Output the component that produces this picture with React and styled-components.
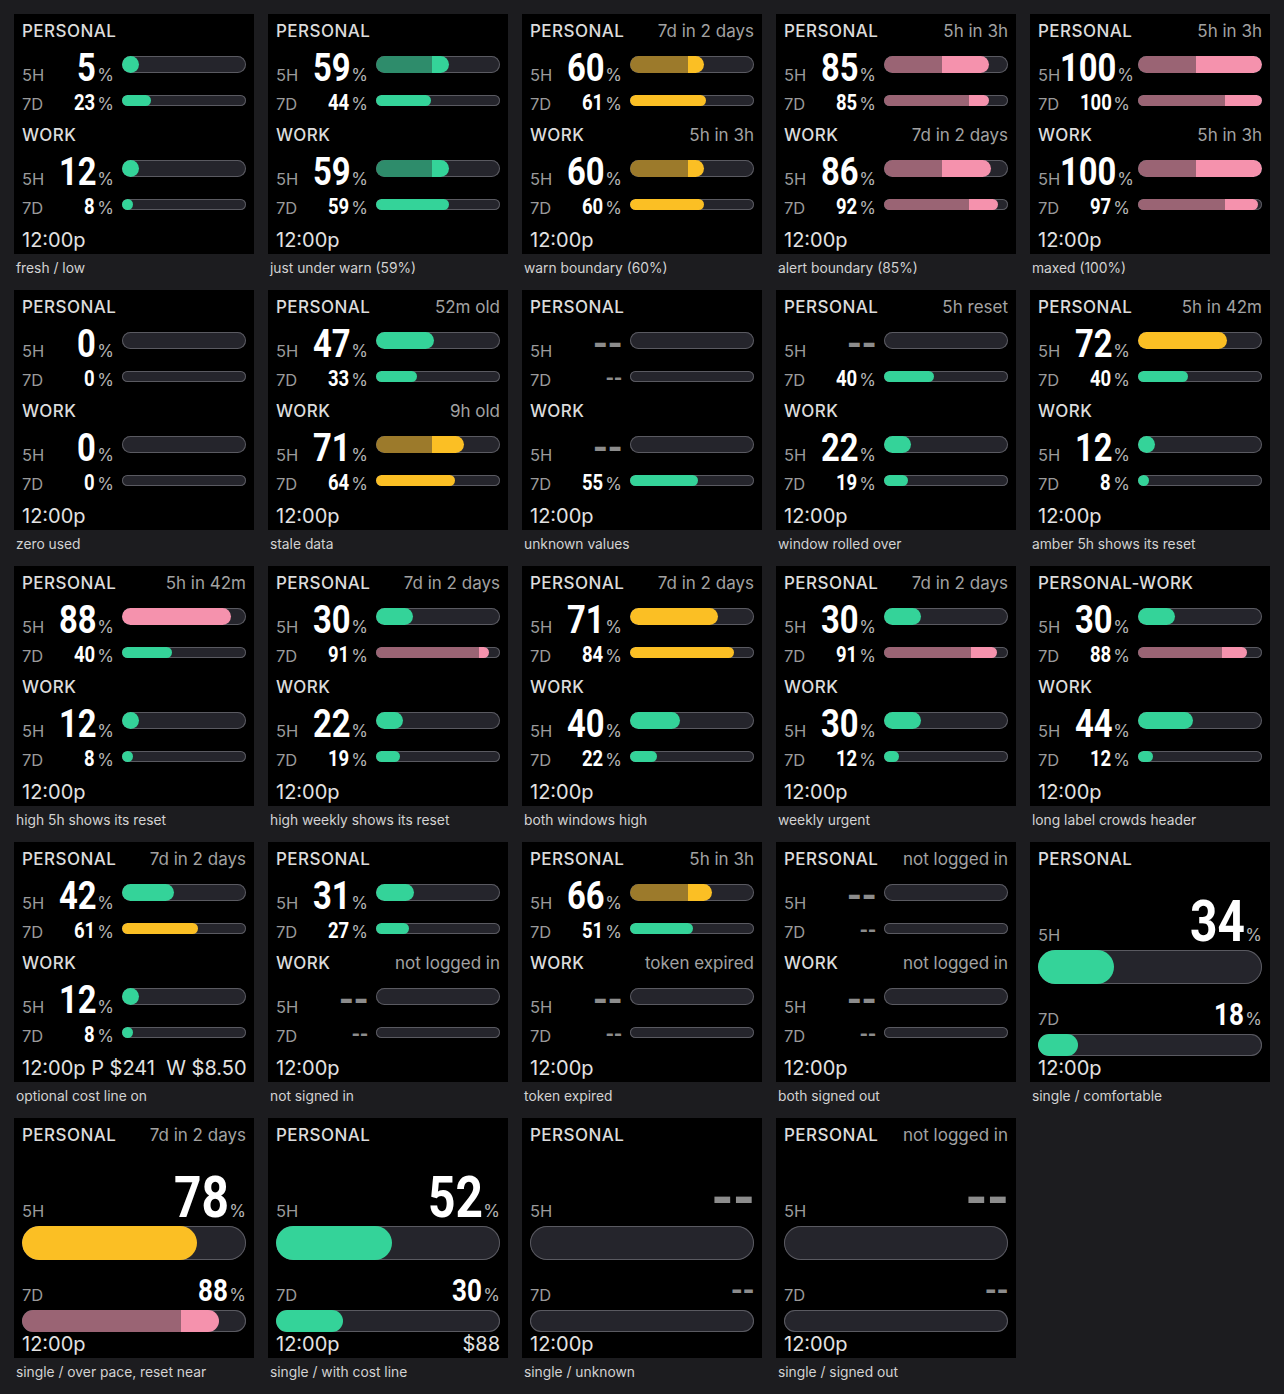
import React from "react";
import styled, { createGlobalStyle } from "styled-components";

const GlobalStyle = createGlobalStyle`
  html, body {
    margin: 0;
    padding: 0;
    background: #1c1c1f;
  }
  body {
    font-family: Inter, "Noto Sans", sans-serif;
    -webkit-font-smoothing: antialiased;
  }
`;

// Roboto Bold squeezed horizontally stands in for the condensed numerals
const NUM_FONT = `Roboto, "Liberation Sans", sans-serif`;
const SQUEEZE = 0.84;
const DIGIT = 0.5576;

const COLORS = {
  green: { bright: "#34d399", dark: "#2e8c6b" },
  amber: { bright: "#fbbf24", dark: "#9c7a2b" },
  pink: { bright: "#f592ad", dark: "#9a6474" },
};

const tone = (v) => (v >= 85 ? "pink" : v >= 60 ? "amber" : "green");

const Grid = styled.div`
  display: grid;
  grid-template-columns: repeat(5, 240px);
  column-gap: 14px;
  padding: 14px 14px 0;
  width: 1284px;
  min-height: 1394px;
  box-sizing: border-box;
  align-content: start;
`;

const Cell = styled.div`
  display: flex;
  flex-direction: column;
`;

const Card = styled.div`
  background: #000;
  height: 240px;
  box-sizing: border-box;
  padding: 6px 8px 2px;
  display: flex;
  flex-direction: column;
`;

const Caption = styled.div`
  height: 36px;
  box-sizing: border-box;
  padding: 5px 2px 0;
  font-size: 13.8px;
  line-height: 18px;
  color: #d2d2d2;
`;

const Sections = styled.div`
  display: flex;
  flex-direction: column;
  gap: 10px;
`;

const Header = styled.div`
  display: flex;
  justify-content: space-between;
  align-items: center;
  height: 22px;
  font-size: 17px;
  line-height: 22px;
  white-space: nowrap;
`;

const Title = styled.span`
  color: #dcdcdc;
  font-weight: 500;
  letter-spacing: 0.45px;
`;

const Status = styled.span`
  color: #a2a2a2;
`;

const Row = styled.div`
  display: flex;
  align-items: center;
  gap: 8px;
  height: ${(p) => (p.$big ? 44 : 28)}px;
`;

const Left = styled.div`
  width: 92px;
  align-self: flex-end;
  display: flex;
  align-items: baseline;
  justify-content: space-between;
  margin-bottom: ${(p) => (p.$big ? -2 : 0)}px;
  white-space: nowrap;
`;

const Label = styled.span`
  font-size: 16.5px;
  line-height: 16px;
  color: #9a9a9a;
  flex-shrink: 0;
`;

const Value = styled.span`
  display: inline-flex;
  align-items: baseline;
  gap: 3px;
`;

const NumBox = styled.span`
  display: inline-block;
  width: ${(p) => p.$w}px;
  white-space: nowrap;
`;

const Num = styled.span`
  display: inline-block;
  font-family: ${NUM_FONT};
  font-weight: 700;
  font-size: ${(p) => p.$size}px;
  line-height: 1;
  color: #fff;
  transform: scaleX(${SQUEEZE});
  transform-origin: left bottom;
`;

const Dash = styled.span`
  font-family: ${NUM_FONT};
  font-weight: 700;
  font-size: ${(p) => p.$size}px;
  line-height: 1;
  color: #8c8c8c;
  letter-spacing: -${(p) => p.$size * 0.02}px;
`;

const Pct = styled.span`
  font-size: 17px;
  line-height: 16px;
  color: #b4b4b4;
`;

const Track = styled.div`
  flex: ${(p) => (p.$full ? "1 1 auto" : "0 0 124px")};
  height: ${(p) => p.$h}px;
  border-radius: 999px;
  background: #25252c;
  box-shadow: inset 0 0 0 1px #5a5a61;
  display: flex;
  overflow: hidden;
`;

const Fill = styled.div`
  height: 100%;
  min-width: ${(p) => p.$h}px;
  border-radius: 999px;
  background: ${(p) => p.$bg};
`;

const Footer = styled.div`
  margin-top: auto;
  display: flex;
  justify-content: space-between;
  font-size: 20px;
  line-height: 24px;
  color: #e2e2e2;
  white-space: pre;
`;

const SingleRow = styled.div`
  display: flex;
  align-items: flex-end;
  height: ${(p) => p.$h}px;
  margin-bottom: ${(p) => p.$mb || 0}px;
`;

const SingleInner = styled.div`
  display: flex;
  width: 100%;
  justify-content: space-between;
  align-items: baseline;
`;

function fillBackground(bar) {
  const c = COLORS[tone(bar.v)];
  if (bar.p && bar.v > bar.p) {
    const cut = (bar.p / bar.v) * 100;
    return `linear-gradient(to right, ${c.dark} 0, ${c.dark} ${cut}%, ${c.bright} ${cut}%)`;
  }
  return c.bright;
}

function Bar({ bar, h, full }) {
  return (
    <Track $h={h} $full={full}>
      {bar.v ? <Fill $h={h} $bg={fillBackground(bar)} style={{ width: `${bar.v}%` }} /> : null}
    </Track>
  );
}

function Reading({ bar, size }) {
  if (bar.v === null) return <Dash $size={size}>--</Dash>;
  const text = String(bar.v);
  const w = Math.round(text.length * DIGIT * size * SQUEEZE - size * 0.03);
  return (
    <Value>
      <NumBox $w={w}>
        <Num $size={size}>{text}</Num>
      </NumBox>
      <Pct>%</Pct>
    </Value>
  );
}

function Section({ section }) {
  return (
    <div>
      <Header>
        <Title>{section.name}</Title>
        {section.status && <Status>{section.status}</Status>}
      </Header>
      <Row $big>
        <Left $big>
          <Label>5H</Label>
          <Reading bar={section.five} size={39} />
        </Left>
        <Bar bar={section.five} h={17} />
      </Row>
      <Row>
        <Left>
          <Label>7D</Label>
          <Reading bar={section.seven} size={22} />
        </Left>
        <Bar bar={section.seven} h={11} />
      </Row>
    </div>
  );
}

function SingleCard({ section, cost }) {
  return (
    <Card>
      <Header>
        <Title>{section.name}</Title>
        {section.status && <Status>{section.status}</Status>}
      </Header>
      <SingleRow $h={80}>
        <SingleInner>
          <Label>5H</Label>
          <Reading bar={section.five} size={57} />
        </SingleInner>
      </SingleRow>
      <Bar bar={section.five} h={32} full />
      <SingleRow $h={46} $mb={4}>
        <SingleInner>
          <Label>7D</Label>
          <Reading bar={section.seven} size={31} />
        </SingleInner>
      </SingleRow>
      <Bar bar={section.seven} h={20} full />
      <Footer>
        <span>12:00p</span>
        {cost && <span>{cost}</span>}
      </Footer>
    </Card>
  );
}

function DualCard({ sections, footer }) {
  return (
    <Card>
      <Sections>
        {sections.map((s) => (
          <Section key={s.name} section={s} />
        ))}
      </Sections>
      <Footer>
        <span>{footer || "12:00p"}</span>
      </Footer>
    </Card>
  );
}

const b = (v, p) => ({ v, p });
const sec = (name, status, five, seven) => ({ name, status, five, seven });

const CARDS = [
  { caption: "fresh / low", sections: [sec("PERSONAL", null, b(5), b(23)), sec("WORK", null, b(12), b(8))] },
  { caption: "just under warn (59%)", sections: [sec("PERSONAL", null, b(59, 45), b(44)), sec("WORK", null, b(59, 45), b(59))] },
  { caption: "warn boundary (60%)", sections: [sec("PERSONAL", "7d in 2 days", b(60, 47), b(61)), sec("WORK", "5h in 3h", b(60, 47), b(60))] },
  { caption: "alert boundary (85%)", sections: [sec("PERSONAL", "5h in 3h", b(85, 47), b(85, 69)), sec("WORK", "7d in 2 days", b(86, 47), b(92, 69))] },
  { caption: "maxed (100%)", sections: [sec("PERSONAL", "5h in 3h", b(100, 47), b(100, 70)), sec("WORK", "5h in 3h", b(100, 47), b(97, 70))] },

  { caption: "zero used", sections: [sec("PERSONAL", null, b(0), b(0)), sec("WORK", null, b(0), b(0))] },
  { caption: "stale data", sections: [sec("PERSONAL", "52m old", b(47), b(33)), sec("WORK", "9h old", b(71, 45), b(64))] },
  { caption: "unknown values", sections: [sec("PERSONAL", null, b(null), b(null)), sec("WORK", null, b(null), b(55))] },
  { caption: "window rolled over", sections: [sec("PERSONAL", "5h reset", b(null), b(40)), sec("WORK", null, b(22), b(19))] },
  { caption: "amber 5h shows its reset", sections: [sec("PERSONAL", "5h in 42m", b(72), b(40)), sec("WORK", null, b(12), b(8))] },

  { caption: "high 5h shows its reset", sections: [sec("PERSONAL", "5h in 42m", b(88), b(40)), sec("WORK", null, b(12), b(8))] },
  { caption: "high weekly shows its reset", sections: [sec("PERSONAL", "7d in 2 days", b(30), b(91, 83)), sec("WORK", null, b(22), b(19))] },
  { caption: "both windows high", sections: [sec("PERSONAL", "7d in 2 days", b(71), b(84)), sec("WORK", null, b(40), b(22))] },
  { caption: "weekly urgent", sections: [sec("PERSONAL", "7d in 2 days", b(30), b(91, 70)), sec("WORK", null, b(30), b(12))] },
  { caption: "long label crowds header", sections: [sec("PERSONAL-WORK", null, b(30), b(88, 68)), sec("WORK", null, b(44), b(12))] },

  { caption: "optional cost line on", footer: "12:00p P $241  W $8.50", sections: [sec("PERSONAL", "7d in 2 days", b(42), b(61)), sec("WORK", null, b(12), b(8))] },
  { caption: "not signed in", sections: [sec("PERSONAL", null, b(31), b(27)), sec("WORK", "not logged in", b(null), b(null))] },
  { caption: "token expired", sections: [sec("PERSONAL", "5h in 3h", b(66, 47), b(51)), sec("WORK", "token expired", b(null), b(null))] },
  { caption: "both signed out", sections: [sec("PERSONAL", "not logged in", b(null), b(null)), sec("WORK", "not logged in", b(null), b(null))] },
  { caption: "single / comfortable", single: sec("PERSONAL", null, b(34), b(18)) },

  { caption: "single / over pace, reset near", single: sec("PERSONAL", "7d in 2 days", b(78), b(88, 71)) },
  { caption: "single / with cost line", cost: "$88", single: sec("PERSONAL", null, b(52), b(30)) },
  { caption: "single / unknown", single: sec("PERSONAL", null, b(null), b(null)) },
  { caption: "single / signed out", single: sec("PERSONAL", "not logged in", b(null), b(null)) },
];

export default function App() {
  return (
    <>
      <GlobalStyle />
      <Grid>
        {CARDS.map((card) => (
          <Cell key={card.caption}>
            {card.single ? (
              <SingleCard section={card.single} cost={card.cost} />
            ) : (
              <DualCard sections={card.sections} footer={card.footer} />
            )}
            <Caption>{card.caption}</Caption>
          </Cell>
        ))}
      </Grid>
    </>
  );
}
